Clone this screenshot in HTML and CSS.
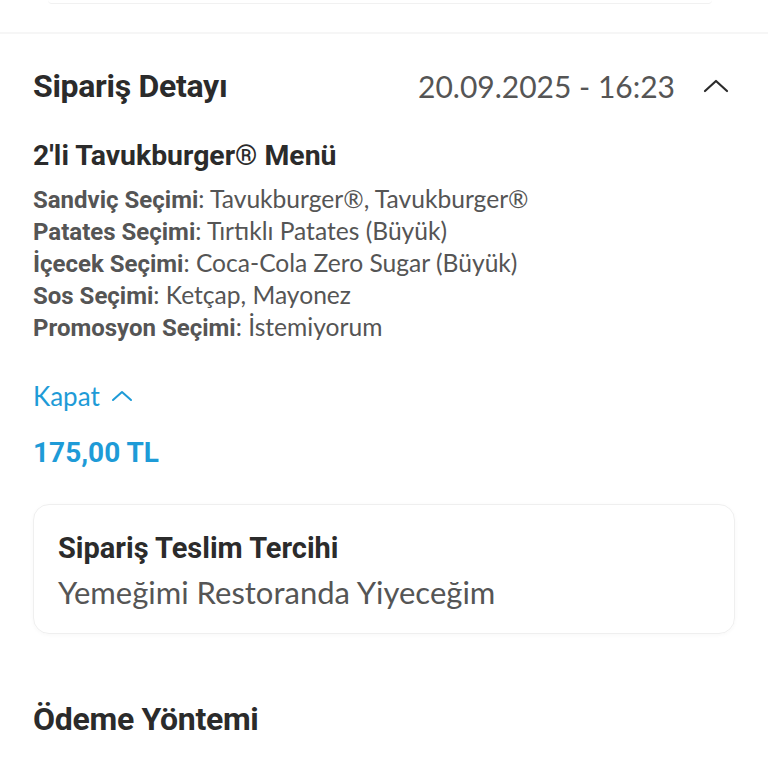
FILE: index.html
```html
<!DOCTYPE html>
<html lang="tr">
<head>
    <meta charset="UTF-8">
    <meta name="viewport" content="width=device-width, initial-scale=1.0">
    <title>Sipariş Detayı</title>
    <link rel="stylesheet" href="styles.css">
</head>
<body>

<div class="prev-card"></div>
<div class="divider"></div>

<div class="content">
    <div class="order-header">
        <h2 class="section-title">Sipariş Detayı</h2>
        <div class="order-meta">
            <span class="order-date">20.09.2025 - 16:23</span>
            <svg class="chevron" width="26" height="14" viewBox="0 0 26 14">
                <path d="M2 12 L13 2 L24 12" fill="none" stroke="#2b2b2b" stroke-width="2.2" stroke-linecap="round" stroke-linejoin="round"/>
            </svg>
        </div>
    </div>

    <div class="product">
        <div class="product-name">2'li Tavukburger® Menü</div>
        <ul class="options">
            <li><b>Sandviç Seçimi</b>: Tavukburger®, Tavukburger®</li>
            <li><b>Patates Seçimi</b>: Tırtıklı Patates (Büyük)</li>
            <li><b>İçecek Seçimi</b>: Coca-Cola Zero Sugar (Büyük)</li>
            <li><b>Sos Seçimi</b>: Ketçap, Mayonez</li>
            <li><b>Promosyon Seçimi</b>: İstemiyorum</li>
        </ul>
        <button class="toggle-link">Kapat
            <svg width="22" height="12" viewBox="0 0 22 12">
                <path d="M2 10 L11 2 L20 10" fill="none" stroke="#1e9bd7" stroke-width="2" stroke-linecap="round" stroke-linejoin="round"/>
            </svg>
        </button>
        <div class="price">175,00 TL</div>
    </div>

    <div class="info-card">
        <div class="info-title">Sipariş Teslim Tercihi</div>
        <div class="info-value">Yemeğimi Restoranda Yiyeceğim</div>
    </div>

    <h2 class="section-title payment-title">Ödeme Yöntemi</h2>
</div>

</body>
</html>
```

FILE: styles.css
```css
body {
    margin: 0;
    padding: 0;
    background-color: #ffffff;
    font-family: Roboto, "Noto Sans", sans-serif;
    color: #2b2b2b;
}
.prev-card {
    height: 3px;
    margin: 0 56px 0 48px;
    border-bottom: 1px solid #f1f1f1;
    border-radius: 0 0 8px 8px;
}
.divider {
    height: 2px;
    margin-top: 28px;
    background-color: #f6f6f6;
}
.content {
    padding: 0 33px;
}
.order-header {
    display: flex;
    justify-content: space-between;
    align-items: center;
    margin-top: 32px;
    height: 40px;
}
.section-title {
    margin: 0;
    font-size: 32px;
    line-height: 40px;
    font-weight: 700;
    color: #2b2b2b;
    letter-spacing: -0.3px;
}
.order-meta {
    display: flex;
    align-items: center;
    gap: 28px;
    margin-right: 6px;
}
.order-date {
    font-family: Lato, sans-serif;
    font-size: 30px;
    color: #555555;
}
.chevron {
    display: block;
}
.product {
    margin-top: 33px;
}
.product-name {
    font-size: 28.4px;
    font-weight: 700;
    color: #2b2b2b;
    line-height: 34px;
}
.options {
    list-style: none;
    margin: 10px 0 0;
    padding: 0;
    font-family: Lato, sans-serif;
    font-size: 24.6px;
    line-height: 32px;
    color: #555555;
}
.options li {
    height: 32px;
}
.options b {
    font-family: Roboto, sans-serif;
    font-size: 24px;
    font-weight: 700;
}
.toggle-link {
    display: flex;
    align-items: center;
    gap: 11px;
    height: 32px;
    margin-top: 37px;
    padding: 0;
    border: none;
    background: none;
    font-family: Lato, sans-serif;
    font-size: 26px;
    color: #1e9bd7;
    cursor: pointer;
}
.price {
    margin-top: 24px;
    font-size: 28px;
    line-height: 34px;
    font-weight: 700;
    color: #1e9bd7;
}
.info-card {
    margin-top: 34px;
    padding: 26px 24px 23px;
    border: 1px solid #efefef;
    border-radius: 16px;
    box-shadow: 0 1px 4px rgba(0, 0, 0, 0.03);
}
.info-title {
    font-size: 29px;
    font-weight: 700;
    color: #2b2b2b;
    line-height: 34px;
}
.info-value {
    margin-top: 9px;
    font-family: Lato, sans-serif;
    font-size: 31px;
    color: #555555;
    line-height: 36px;
}
.payment-title {
    margin-top: 65px;
}
```
